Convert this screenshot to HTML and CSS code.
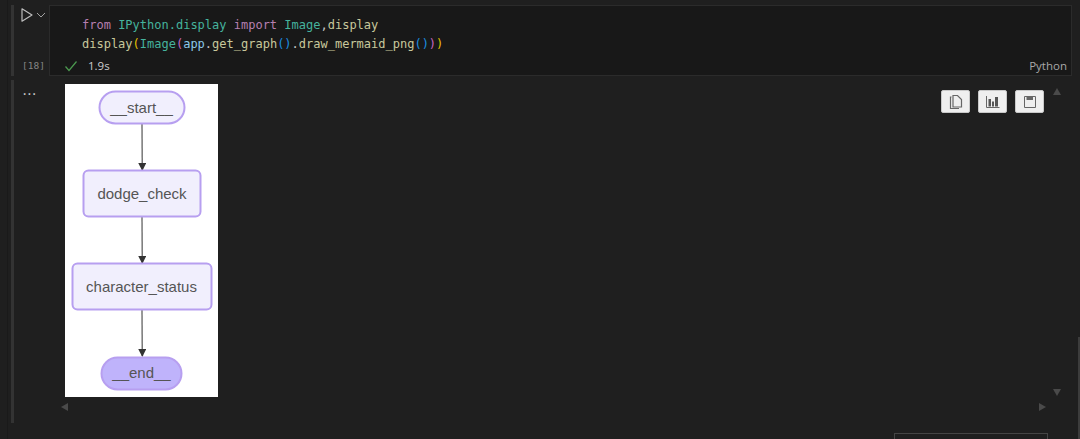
FILE: index.html
```html
<!DOCTYPE html>
<html>
<head>
  <title>Notebook cell</title>
  <link rel="stylesheet" href="styles.css">
</head>
<body>
  <div class="notebook">
    <div class="cell">
      <div class="gutter">
        <div class="bar"></div>
        <div class="run-col">
          <div class="run-row">
            <svg class="run-icon" width="14" height="16" viewBox="0 0 14 16"><path d="M2 1.8 L12 8 L2 14.2 Z" fill="none" stroke="#bdbdbd" stroke-width="1.2" stroke-linejoin="round"/></svg>
            <svg class="chevron" width="10" height="10" viewBox="0 0 10 10"><path d="M1 3 L5 7 L9 3" fill="none" stroke="#a0a0a0" stroke-width="1"/></svg>
          </div>
          <div class="exec-count">[18]</div>
        </div>
      </div>
      <div class="cell-body">
        <pre class="code"><span class="kw">from</span> <span class="cls">IPython.display</span> <span class="kw">import</span> <span class="cls">Image</span><span class="pl">,</span><span class="fn">display</span>
<span class="fn">display</span><span class="b1">(</span><span class="cls">Image</span><span class="b2">(</span><span class="var">app</span><span class="pl">.</span><span class="fn">get_graph</span><span class="b3">()</span><span class="pl">.</span><span class="fn">draw_mermaid_png</span><span class="b3">()</span><span class="b2">)</span><span class="b1">)</span></pre>
        <div class="status">
          <svg width="14" height="14" viewBox="0 0 14 14"><path d="M1.5 7.5 L5 11.5 L12.5 2.5" fill="none" stroke="#4c9a50" stroke-width="1.2"/></svg>
          <span class="time">1.9s</span>
          <span class="lang">Python</span>
        </div>
      </div>
    </div>

    <div class="cell output">
      <div class="gutter">
        <div class="bar"></div>
        <div class="dots">...</div>
      </div>
      <div class="output-body">
        <svg class="graph" width="153" height="313" viewBox="0 0 153 313">
          <defs>
            <marker id="arrow" markerWidth="9" markerHeight="9" refX="7" refY="4" orient="auto" markerUnits="userSpaceOnUse">
              <path d="M0 0 L8 4 L0 8 Z" fill="#333"/>
            </marker>
          </defs>
          <path class="edge" d="M77 40 L77.3 86"/>
          <path class="edge" d="M77 133 L77.3 179"/>
          <path class="edge" d="M77 226 L77.3 272"/>
          <rect class="node" x="34.5" y="7.5" width="85" height="32" rx="16"/>
          <rect class="node" x="18.5" y="86.5" width="117" height="46" rx="5"/>
          <rect class="node" x="7.5" y="179.5" width="139" height="46" rx="5"/>
          <rect class="node end" x="36.5" y="273.5" width="80" height="32" rx="16"/>
          <text x="76.5" y="29">__start__</text>
          <text x="77" y="115">dodge_check</text>
          <text x="76.5" y="208">character_status</text>
          <text x="76.5" y="294">__end__</text>
        </svg>
        <div class="actions">
          <button class="action">
            <svg width="14" height="16" viewBox="0 0 14 16"><path d="M4 1.5 H8.5 L12.5 5.5 V13 H4 Z M2.5 3 H1.5 V14.5 H10" fill="none" stroke="#666" stroke-width="1.2"/></svg>
          </button>
          <button class="action">
            <svg width="16" height="16" viewBox="0 0 16 16"><path d="M1.5 2 V13.5 H14.5" fill="none" stroke="#666" stroke-width="1"/><path d="M3.5 5 H6 V12.5 H3.5 Z M7 7.5 H9 V12.5 H7 Z M10 3 H13 V12.5 H10 Z" fill="#555"/></svg>
          </button>
          <button class="action">
            <svg width="14" height="16" viewBox="0 0 14 16"><path d="M1.5 2.5 H12.5 V13.5 H1.5 Z" fill="none" stroke="#666" stroke-width="1"/><path d="M3.5 2.5 H10 V6 H3.5 Z" fill="#666"/></svg>
          </button>
        </div>
        <span class="arrow up"></span>
        <span class="arrow down"></span>
        <span class="arrow left"></span>
        <span class="arrow right"></span>
      </div>
    </div>

    <div class="find-box"></div>
  </div>
  <div class="scrollbar"></div>
</body>
</html>
```

FILE: styles.css
```css
/* page */
html, body {
  height: 100%;
}

body {
  margin: 0;
  background-color: #1f1f1f;
  background-image: linear-gradient(to right, transparent 7px, #1a1a1a 7px, #1a1a1a 8px, transparent 8px);
  overflow: hidden;
  position: relative;
  font-family: "Open Sans", "Noto Sans", sans-serif;
}

.notebook {
  padding-top: 5px;
  height: 434px;
  overflow: hidden;
}

/* cells */
.cell {
  display: flex;
}

.gutter {
  width: 49px;
  flex: none;
  display: flex;
  padding-left: 11px;
  box-sizing: border-box;
}

.bar {
  width: 3px;
  flex: none;
  background-color: #333;
}

.run-col {
  flex: 1;
  padding-left: 6px;
  display: flex;
  flex-direction: column;
}

.run-row {
  display: flex;
  align-items: center;
  gap: 2px;
  margin-top: 2px;
}

.chevron {
  margin-top: -1px;
}

.exec-count {
  margin-top: auto;
  margin-bottom: 4px;
  padding-left: 2px;
  font-family: "DejaVu Sans Mono", monospace;
  font-size: 9.5px;
  line-height: 12px;
  color: #858585;
}

.cell-body {
  width: 1023px;
  height: 71px;
  box-sizing: border-box;
  border: 1px solid #2b2b2b;
  background-color: #181818;
}

.code {
  margin: 0;
  padding: 10px 0 0 32px;
  font-family: "DejaVu Sans Mono", monospace;
  font-size: 12px;
  line-height: 19px;
  color: #d4d4d4;
}

.kw { color: #b67fb0; }
.cls { color: #45b39d; }
.fn { color: #c8c89c; }
.var { color: #8cc8e8; }
.pl { color: #c4c4c4; }
.b1 { color: #e6c200; }
.b2 { color: #c766c0; }
.b3 { color: #1a8fe0; }

.status {
  display: flex;
  align-items: center;
  padding: 4px 4px 0 14px;
  font-size: 11.5px;
  line-height: 16px;
  color: #cccccc;
}

.time {
  margin-left: 10px;
}

.lang {
  margin-left: auto;
  color: #a8a8a8;
}

/* output */
.output {
  margin-top: 4px;
}

.output .gutter {
  height: 343px;
}

.dots {
  padding: 3px 0 0 9px;
  font-size: 12px;
  font-weight: 600;
  line-height: 16px;
  letter-spacing: 1.5px;
  color: #cccccc;
}

.output-body {
  position: relative;
  flex: 1;
  padding: 4px 0 0 16px;
}

.graph {
  display: block;
  background-color: #fff;
}

.edge {
  fill: none;
  stroke: #777;
  stroke-width: 1.5;
  marker-end: url(#arrow);
}

.node {
  fill: #f1effd;
  stroke: #b79ff0;
  stroke-width: 2;
}

.node.end {
  fill: #bfb3fb;
}

.graph text {
  font-family: "Liberation Sans", Arial, sans-serif;
  font-size: 15px;
  fill: #555;
  text-anchor: middle;
}

.actions {
  position: absolute;
  top: 10px;
  left: 892px;
  display: flex;
  gap: 8px;
}

.action {
  width: 29px;
  height: 23px;
  padding: 0;
  display: flex;
  align-items: center;
  justify-content: center;
  background-color: #efefef;
  border: 1px solid #c8c8c8;
  border-radius: 2px;
}

/* scroll arrows on the output */
.arrow {
  position: absolute;
  width: 0;
  height: 0;
  border-style: solid;
  border-color: transparent;
}

.arrow.up {
  top: 8px;
  left: 1004px;
  border-width: 0 4.5px 7px 4.5px;
  border-bottom-color: #4a4a4a;
}

.arrow.down {
  top: 309px;
  left: 1004px;
  border-width: 7px 4.5px 0 4.5px;
  border-top-color: #4a4a4a;
}

.arrow.left {
  top: 323px;
  left: 12px;
  border-width: 4.5px 7px 4.5px 0;
  border-right-color: #4a4a4a;
}

.arrow.right {
  top: 323px;
  left: 990px;
  border-width: 4.5px 0 4.5px 7px;
  border-left-color: #4a4a4a;
}

/* bottom edge of the box below the output */
.find-box {
  width: 152px;
  height: 20px;
  margin: 10px 0 0 894px;
  border: 1px solid #454545;
}

.scrollbar {
  position: absolute;
  top: 337px;
  right: 0;
  width: 2px;
  height: 102px;
  background-color: #3c3c3c;
}
```
